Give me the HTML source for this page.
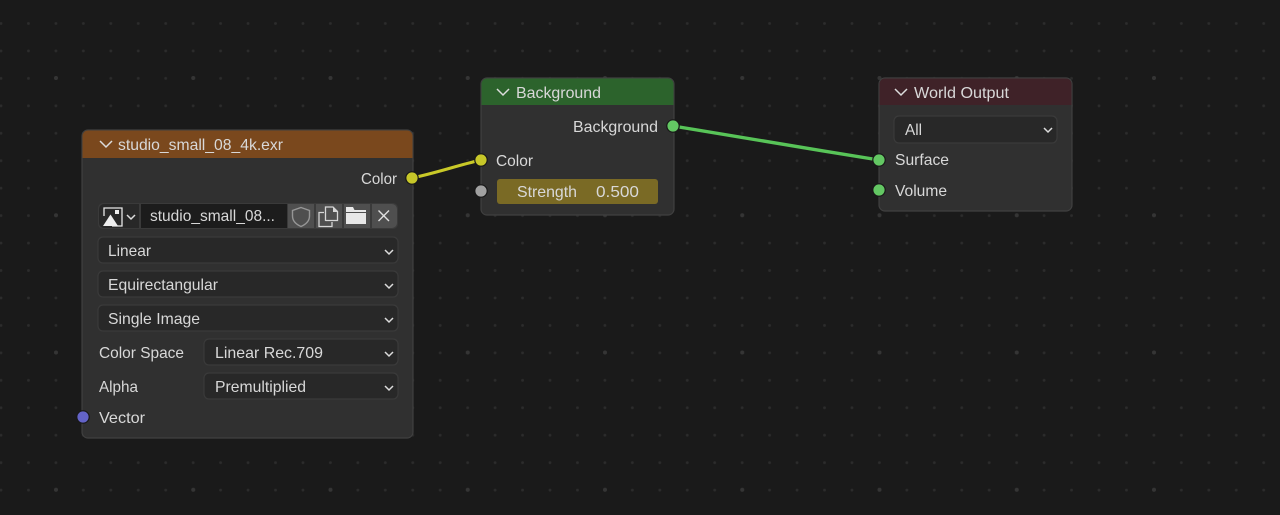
<!DOCTYPE html>
<html><head><meta charset="utf-8"><style>
html,body{margin:0;padding:0;background:#1a1a1a;width:1280px;height:515px;overflow:hidden}
svg{display:block;filter:blur(0.35px)}
text{font-family:"Liberation Sans",sans-serif;font-size:16px;fill:#d8d8d8}
.w{fill:#282828;stroke:#3a3a3a;stroke-width:1.2}
.c{fill:none;stroke:#dcdcdc;stroke-width:1.5}
.n{fill:#303030;stroke:#404040;stroke-width:1.2}
.s{stroke:#181818;stroke-width:1.2}
</style></head><body>
<svg width="1280" height="515" viewBox="0 0 1280 515" xmlns="http://www.w3.org/2000/svg">
<defs>
<pattern id="g" x="1" y="-4" width="27.45" height="27.45" patternUnits="userSpaceOnUse"><circle cx="0" cy="0" r="1.4" fill="#2c2c2c"/><circle cx="27.45" cy="0" r="1.4" fill="#2c2c2c"/><circle cx="0" cy="27.45" r="1.4" fill="#2c2c2c"/><circle cx="27.45" cy="27.45" r="1.4" fill="#2c2c2c"/></pattern>
<pattern id="G" x="56" y="78" width="137.25" height="137.25" patternUnits="userSpaceOnUse"><circle cx="0" cy="0" r="2" fill="#353535"/><circle cx="137.25" cy="0" r="2" fill="#353535"/><circle cx="0" cy="137.25" r="2" fill="#353535"/><circle cx="137.25" cy="137.25" r="2" fill="#353535"/></pattern>
</defs>
<rect width="1280" height="515" fill="#1a1a1a"/>
<rect width="1280" height="515" fill="url(#g)"/>
<rect width="1280" height="515" fill="url(#G)"/>

<!-- image node -->
<rect class="n" x="82" y="130" width="331" height="308" rx="6"/>
<path d="M82.5 158V136a5.500 5.500 0 0 1 5.500-5.500H407a5.500 5.500 0 0 1 5.500 5.500V158Z" fill="#7a481d"/>
<path class="c" d="M100 141l6 6 6-6"/>
<text x="118" y="150" textLength="165" lengthAdjust="spacingAndGlyphs">studio_small_08_4k.exr</text>
<text x="361" y="184" textLength="36" lengthAdjust="spacingAndGlyphs">Color</text>

<rect x="98" y="203" width="300" height="26" rx="5" fill="#3a3a3a"/>
<path d="M99 209a5 5 0 0 1 5-5H139V228H104a5 5 0 0 1-5-5Z" fill="#282828"/>
<rect x="141" y="204" width="146" height="24" fill="#1c1c1c"/>
<path d="M288 204H314V228H288Z" fill="#4f4f4f"/>
<rect x="316" y="204" width="26" height="24" fill="#4f4f4f"/>
<rect x="344" y="204" width="26" height="24" fill="#4f4f4f"/>
<path d="M372 204H392a5 5 0 0 1 5 5V223a5 5 0 0 1-5 5H372Z" fill="#4f4f4f"/>
<!-- image icon -->
<path d="M112 226H122V208H104V216" fill="none" stroke="#e6e6e6" stroke-width="1.3"/>
<path d="M103 226L110.500 214.500L118 226Z" fill="#eeeeee"/>
<rect x="115" y="210" width="4" height="4" fill="#eeeeee"/>
<path class="c" d="M127 215l4 4 4-4"/>
<text x="150" y="221" textLength="125" lengthAdjust="spacingAndGlyphs">studio_small_08...</text>
<!-- shield -->
<path d="M301 207.500L309.500 210.500V216C309.500 221.500 305.500 224.500 301 226.500C296.500 224.500 292.500 221.500 292.500 216V210.500Z" fill="none" stroke="#969696" stroke-width="1.4"/>
<!-- duplicate -->
<path d="M325.500 221V207H333L337.500 211.500V220.500H325.500Z" fill="none" stroke="#d6d6d6" stroke-width="1.3"/>
<path d="M333 207V212H337.500Z" fill="#d6d6d6"/>
<path d="M324 212.500H319V226.500H332V222" fill="none" stroke="#d6d6d6" stroke-width="1.3"/>
<!-- folder -->
<path d="M346 207H353L354.500 210H366V212H346Z" fill="#e8e8e8"/>
<rect x="346" y="213" width="20" height="11" fill="#e8e8e8"/>
<!-- x -->
<path d="M378.500 210.500L389 221M389 210.500L378.500 221" stroke="#e0e0e0" stroke-width="1.4" fill="none"/>

<rect class="w" x="98" y="237" width="300" height="26" rx="5"/>
<text x="108" y="256" textLength="43" lengthAdjust="spacingAndGlyphs">Linear</text>
<path class="c" d="M385 250l4 4 4-4"/>
<rect class="w" x="98" y="271" width="300" height="26" rx="5"/>
<text x="108" y="290" textLength="110" lengthAdjust="spacingAndGlyphs">Equirectangular</text>
<path class="c" d="M385 284l4 4 4-4"/>
<rect class="w" x="98" y="305" width="300" height="26" rx="5"/>
<text x="108" y="324" textLength="92" lengthAdjust="spacingAndGlyphs">Single Image</text>
<path class="c" d="M385 318l4 4 4-4"/>
<text x="99" y="358" textLength="85" lengthAdjust="spacingAndGlyphs">Color Space</text>
<rect class="w" x="204" y="339" width="194" height="26" rx="5"/>
<text x="215" y="358" textLength="108" lengthAdjust="spacingAndGlyphs">Linear Rec.709</text>
<path class="c" d="M385 352l4 4 4-4"/>
<text x="99" y="392" textLength="39" lengthAdjust="spacingAndGlyphs">Alpha</text>
<rect class="w" x="204" y="373" width="194" height="26" rx="5"/>
<text x="215" y="392" textLength="91" lengthAdjust="spacingAndGlyphs">Premultiplied</text>
<path class="c" d="M385 386l4 4 4-4"/>
<text x="99" y="423" textLength="46" lengthAdjust="spacingAndGlyphs">Vector</text>

<!-- background node -->
<rect class="n" x="481" y="78" width="193" height="137" rx="6"/>
<path d="M481.500 105V84a5.500 5.500 0 0 1 5.500-5.500H668a5.500 5.500 0 0 1 5.500 5.500V105Z" fill="#2c632c"/>
<path class="c" d="M497 89l6 6 6-6"/>
<text x="516" y="98" textLength="85" lengthAdjust="spacingAndGlyphs">Background</text>
<text x="573" y="132" textLength="85" lengthAdjust="spacingAndGlyphs">Background</text>
<text x="496" y="166" textLength="37" lengthAdjust="spacingAndGlyphs">Color</text>
<rect x="497" y="179" width="161" height="25" rx="3" fill="#7a6a25"/>
<text x="517" y="197" textLength="60" lengthAdjust="spacingAndGlyphs">Strength</text>
<text x="596" y="197" textLength="43" lengthAdjust="spacingAndGlyphs">0.500</text>

<!-- world output -->
<rect class="n" x="879" y="78" width="193" height="133" rx="6"/>
<path d="M879.500 105V84a5.500 5.500 0 0 1 5.500-5.500H1066a5.500 5.500 0 0 1 5.500 5.500V105Z" fill="#3f2228"/>
<path class="c" d="M895 89l6 6 6-6"/>
<text x="914" y="98" textLength="95" lengthAdjust="spacingAndGlyphs">World Output</text>
<rect class="w" x="894" y="116" width="163" height="27" rx="5"/>
<text x="905" y="135" textLength="17" lengthAdjust="spacingAndGlyphs">All</text>
<path class="c" d="M1044 128l4 4 4-4"/>
<text x="895" y="165" textLength="54" lengthAdjust="spacingAndGlyphs">Surface</text>
<text x="895" y="196" textLength="52" lengthAdjust="spacingAndGlyphs">Volume</text>

<!-- links: dark halo, then colour -->
<path d="M412 178C440 172 455 166 481 160" fill="none" stroke="#1a1a1a" stroke-width="5"/>
<path d="M412 178C440 172 455 166 481 160" fill="none" stroke="#c9c928" stroke-width="3.2"/>
<path d="M673 126C740 137 810 149 879 160" fill="none" stroke="#1a1a1a" stroke-width="5" stroke-opacity=".6"/>
<path d="M673 126C740 137 810 149 879 160" fill="none" stroke="#58c458" stroke-width="3.4"/>

<!-- sockets -->
<circle class="s" cx="83" cy="417" r="6.2" fill="#6363c7"/>
<circle class="s" cx="412" cy="178" r="6.2" fill="#c7c729"/>
<circle class="s" cx="481" cy="160" r="6.2" fill="#c7c729"/>
<circle class="s" cx="481" cy="191" r="6.2" fill="#a1a1a1"/>
<circle class="s" cx="673" cy="126" r="6.2" fill="#63c763"/>
<circle class="s" cx="879" cy="160" r="6.2" fill="#63c763"/>
<circle class="s" cx="879" cy="190" r="6.2" fill="#63c763"/>
</svg>
</body></html>
